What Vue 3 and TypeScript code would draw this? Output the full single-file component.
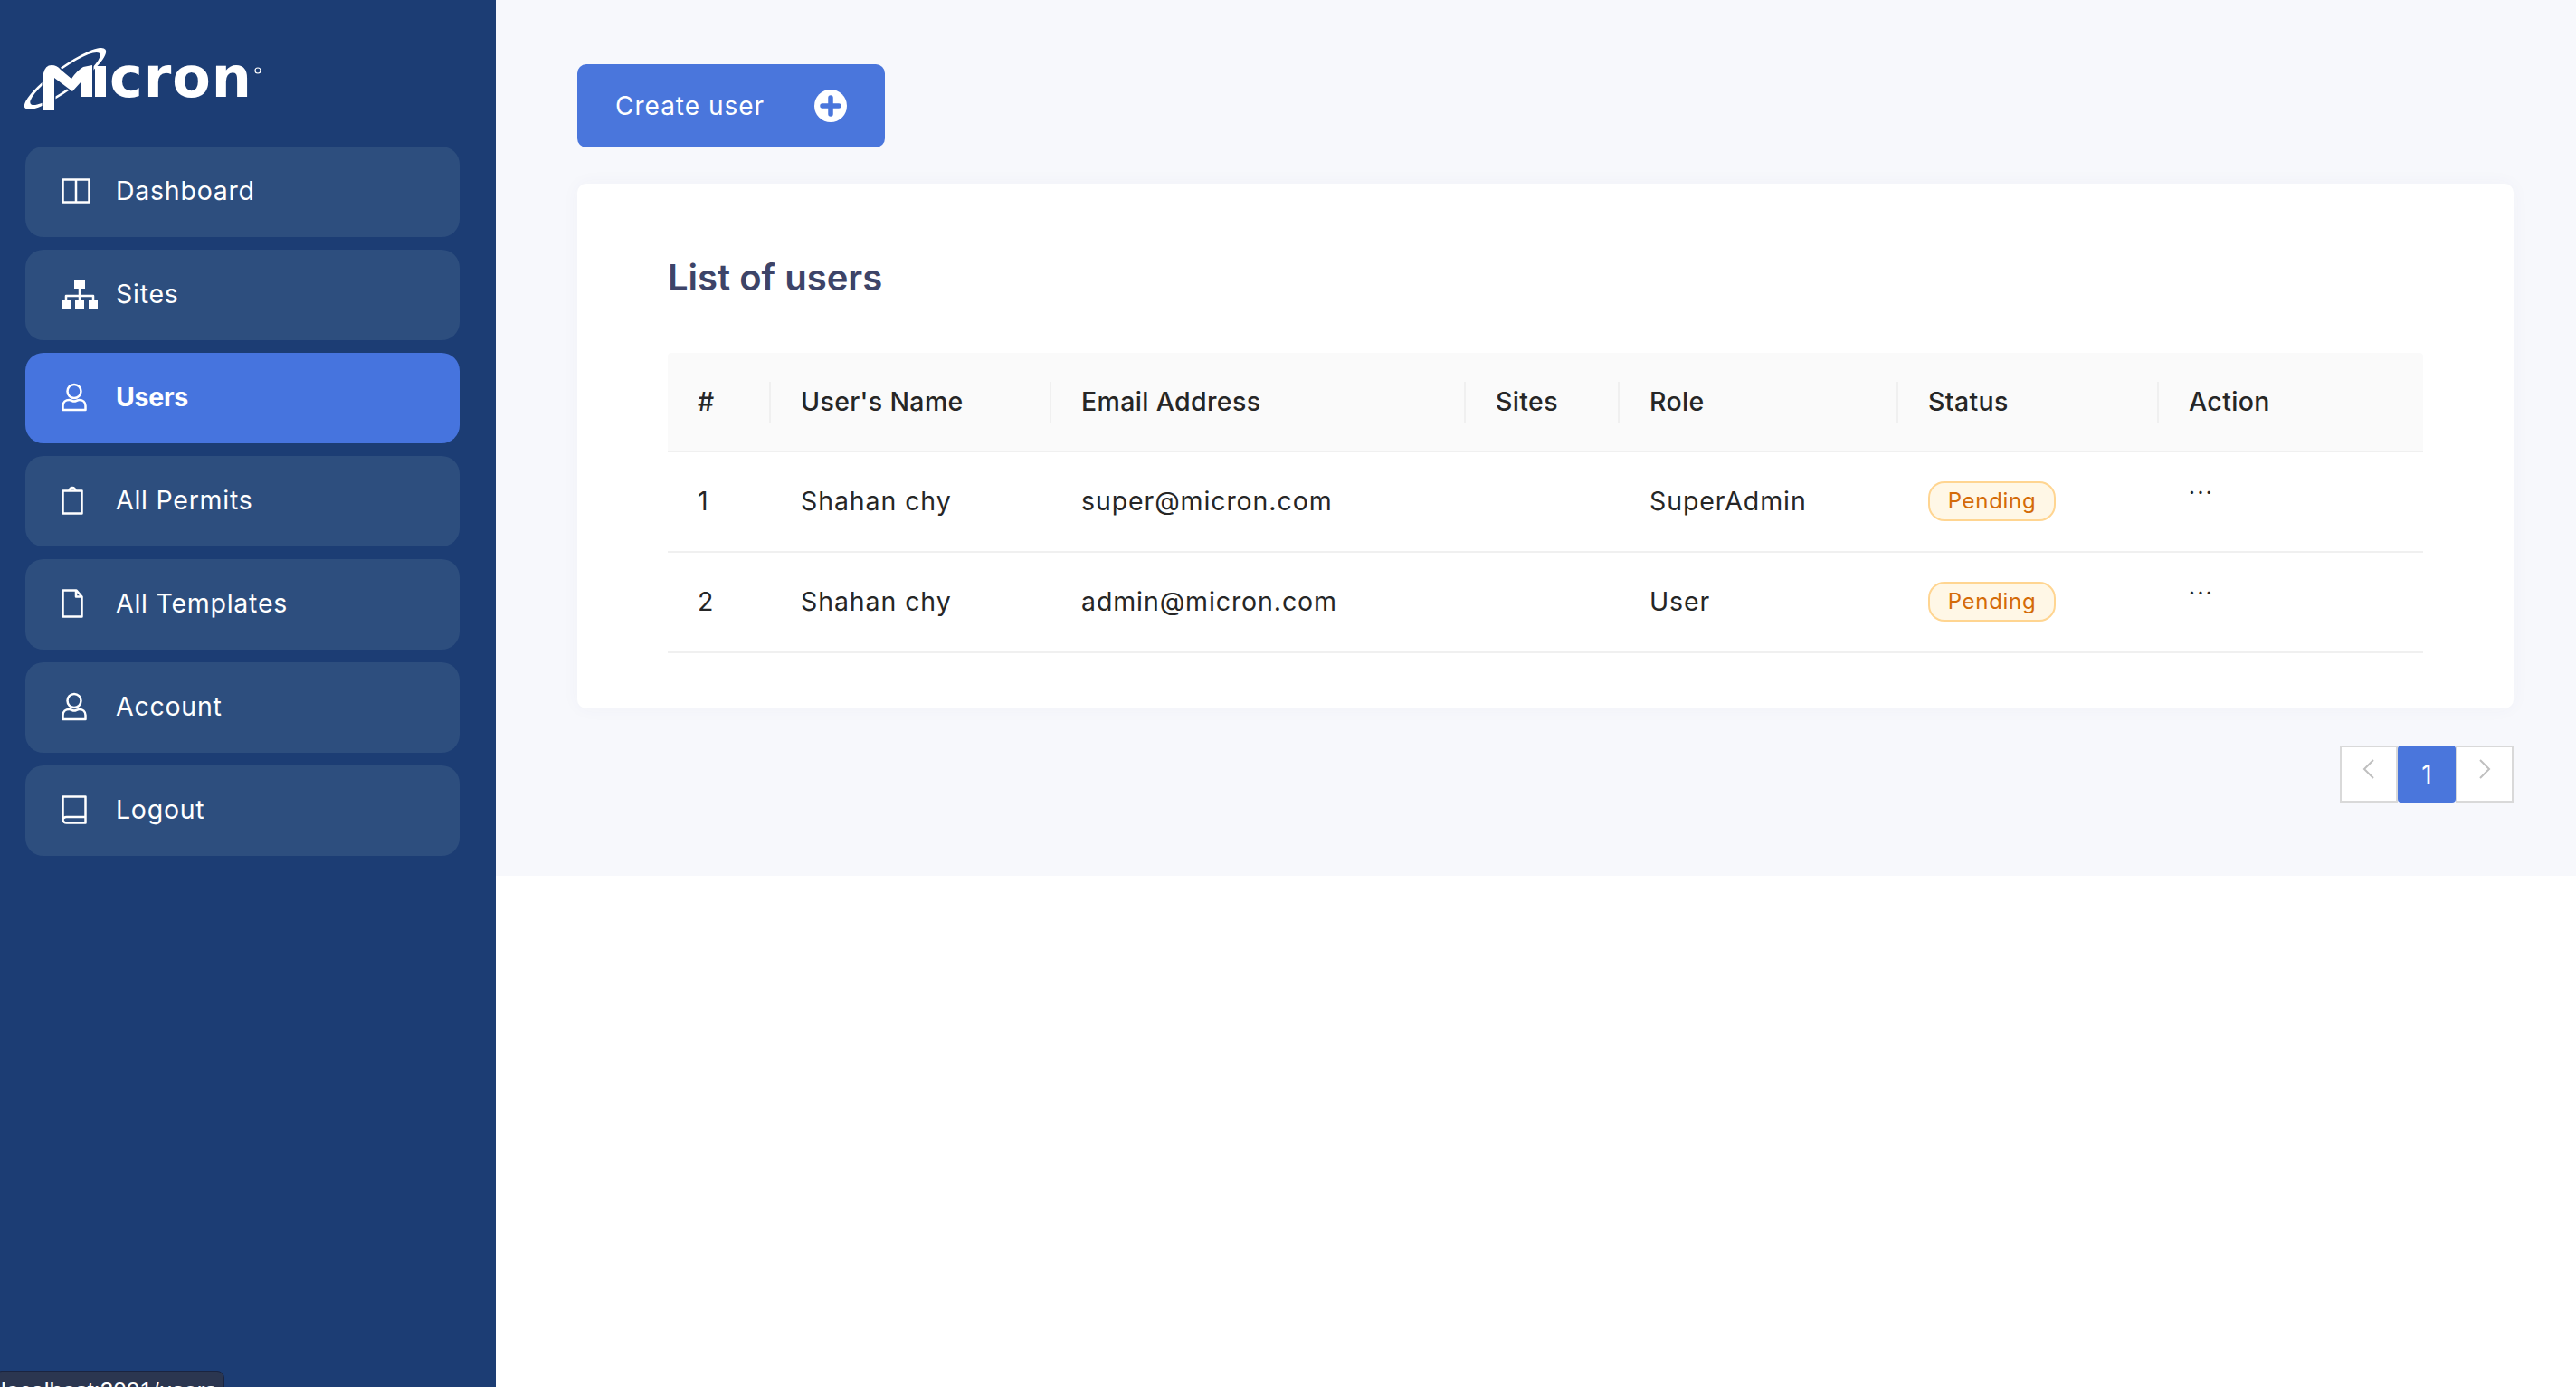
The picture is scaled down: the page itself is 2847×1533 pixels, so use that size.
<script setup lang="ts">
interface IconPart {
  d: string;
  fill?: boolean;
}

interface NavItem {
  label: string;
  width: number;
  height: number;
  parts: IconPart[];
  active?: boolean;
}

interface UserRow {
  id: number;
  name: string;
  email: string;
  sites: string;
  role: string;
  status: string;
}

const userIcon: IconPart[] = [
  { d: 'M14 2a7.5 7.5 0 1 1 0 15a7.5 7.5 0 1 1 0-15z' },
  { d: 'M1.5 30v-4.500c0-4 3-6.500 7-6.500c2 0 3.500 1.500 5.500 1.500s3.500-1.500 5.500-1.500c4 0 7 2.500 7 6.500v4.500z' },
];

const navItems: NavItem[] = [
  {
    label: 'Dashboard', width: 32, height: 28,
    parts: [{ d: 'M1.500 1.500h29v25h-29zM16 1.500v25' }],
  },
  {
    label: 'Sites', width: 40, height: 32,
    parts: [
      { d: 'M14 0h12v10h-12zM0 23h10v9h-10zM15 23h10v9h-10zM30 23h10v9h-10z', fill: true },
      { d: 'M5 24v-6h30v6M20 9v15' },
    ],
  },
  { label: 'Users', width: 28, height: 32, parts: userIcon, active: true },
  {
    label: 'All Permits', width: 24, height: 32,
    parts: [{ d: 'M1.500 5.500h21v25h-21zM8.500 5.500a3.500 3.500 0 0 1 7 0' }],
  },
  {
    label: 'All Templates', width: 24, height: 32,
    parts: [{ d: 'M1.500 1.500h15l6 7v22h-21zM16 1.500v7h6.500' }],
  },
  { label: 'Account', width: 28, height: 32, parts: userIcon },
  {
    label: 'Logout', width: 28, height: 32,
    parts: [{ d: 'M1.500 27V1.500h25v29h-21a4 3.500 0 0 1 -4-3.500a4 3 0 0 1 4-3h21' }],
  },
];

const columns = ['#', "User's Name", 'Email Address', 'Sites', 'Role', 'Status', 'Action'];

const users: UserRow[] = [
  { id: 1, name: 'Shahan chy', email: 'super@micron.com', sites: '', role: 'SuperAdmin', status: 'Pending' },
  { id: 2, name: 'Shahan chy', email: 'admin@micron.com', sites: '', role: 'User', status: 'Pending' },
];
</script>

<template>
  <div class="layout">
    <aside class="sidebar">
      <svg class="logo" viewBox="25 40 270 90" role="img" aria-label="Micron">
        <g transform="rotate(-36 72 87)">
          <path class="logo-fill" fill-rule="evenodd" d="M17 87a55 13 0 1 0 110 0a55 13 0 1 0-110 0zM25 88a47 10.500 0 1 0 94-2a47 10.500 0 1 0-94 2z" />
        </g>
        <path class="logo-m" d="M48 122V81Q50 72 57 72Q63 72 67 77L79 87Q85 78 92 74L102 72V107H90V90L80 101L60 86V122Z" />
        <rect class="logo-fill" x="105" y="73" width="12" height="34" />
        <text class="logo-word" x="121" y="107" textLength="157">cron</text>
        <circle class="logo-reg" cx="285" cy="78" r="3" />
      </svg>

      <nav class="nav">
        <a v-for="item in navItems" :key="item.label" class="nav-item" :class="{ active: item.active }">
          <span class="nav-icon">
            <svg :width="item.width" :height="item.height" :viewBox="`0 0 ${item.width} ${item.height}`">
              <path
                v-for="(part, i) in item.parts"
                :key="i"
                :d="part.d"
                :class="part.fill ? 'icon-fill' : 'icon-line'"
              />
            </svg>
          </span>
          <span class="nav-label">{{ item.label }}</span>
        </a>
      </nav>
    </aside>

    <main class="main">
      <section class="content">
        <button class="create-btn" type="button">
          <span>Create user</span>
          <svg width="36" height="36" viewBox="0 0 36 36">
            <circle cx="18" cy="18" r="18" fill="#fff" />
            <path d="M18 9v18M9 18h18" stroke="#4a76dc" stroke-width="5.500" stroke-linecap="round" />
          </svg>
        </button>

        <div class="card">
          <h2 class="title">List of users</h2>
          <table class="table">
            <colgroup>
              <col style="width: 114px" />
              <col style="width: 310px" />
              <col style="width: 458px" />
              <col style="width: 170px" />
              <col style="width: 308px" />
              <col style="width: 288px" />
              <col />
            </colgroup>
            <thead>
              <tr>
                <th v-for="col in columns" :key="col">{{ col }}</th>
              </tr>
            </thead>
            <tbody>
              <tr v-for="user in users" :key="user.email">
                <td>{{ user.id }}</td>
                <td>{{ user.name }}</td>
                <td>{{ user.email }}</td>
                <td>{{ user.sites }}</td>
                <td>{{ user.role }}</td>
                <td><span class="tag">{{ user.status }}</span></td>
                <td class="action"><span>...</span></td>
              </tr>
            </tbody>
          </table>
        </div>

        <div class="pagination">
          <span class="page">
            <svg width="14" height="24" viewBox="0 0 14 24"><path d="M12 2L2 12l10 10" /></svg>
          </span>
          <span class="page current">1</span>
          <span class="page">
            <svg width="14" height="24" viewBox="0 0 14 24"><path d="M2 2l10 10L2 22" /></svg>
          </span>
        </div>
      </section>
    </main>

    <div class="status-url">localhost:3001/users</div>
  </div>
</template>

<style scoped>
.layout {
  display: flex;
  height: 100vh;
  overflow: hidden;
  font-family: Inter, "Liberation Sans", sans-serif;
  color: #262626;
}

.sidebar {
  flex: 0 0 548px;
  box-sizing: border-box;
  padding: 40px 40px 0 28px;
  background: #1c3d74;
}

.logo {
  display: block;
  width: 270px;
  height: 90px;
  margin: 0 0 32px -3px;
}

.logo-fill {
  fill: #fff;
}

.logo-m {
  fill: #fff;
  stroke: #1c3d74;
  stroke-width: 3px;
  paint-order: stroke;
}

.logo-word {
  fill: #fff;
  font-family: "DejaVu Sans", sans-serif;
  font-size: 62px;
  font-weight: 700;
}

.logo-reg {
  fill: none;
  stroke: #fff;
  stroke-width: 1.200px;
}

.nav {
  display: flex;
  flex-direction: column;
  gap: 14px;
}

.nav-item {
  display: flex;
  align-items: center;
  box-sizing: border-box;
  height: 100px;
  padding: 0 0 3px 40px;
  border-radius: 20px;
  background: #2d4e7e;
  color: #fff;
  font-size: 28.500px;
  letter-spacing: 0.75px;
}

.nav-item.active {
  background: #4674de;
  font-weight: 700;
  letter-spacing: -0.3px;
}

.nav-icon {
  display: flex;
  align-items: center;
  width: 61px;
}

.nav-label {
  margin-left: -1px;
}

.icon-line {
  fill: none;
  stroke: #fff;
  stroke-width: 2.500px;
  stroke-linejoin: round;
}

.icon-fill {
  fill: #fff;
}

.main {
  flex: 1;
  min-width: 0;
  background: #fff;
}

.content {
  padding: 71px 69px 81px 90px;
  background: #f7f8fc;
}

.create-btn {
  display: flex;
  align-items: center;
  justify-content: space-between;
  box-sizing: border-box;
  width: 340px;
  height: 92px;
  padding: 0 42px 0 42px;
  border: 0;
  border-radius: 10px;
  background: #4a76dc;
  color: #fff;
  font-family: inherit;
  font-size: 28px;
  letter-spacing: 1px;
}

.card {
  margin-top: 40px;
  padding: 74px 100px 61px;
  border-radius: 10px;
  background: #fff;
  box-shadow: 0 0 20px rgba(70, 80, 130, 0.04);
}

.title {
  margin: 0 0 53px;
  color: #3d4468;
  font-size: 40px;
  font-weight: 600;
  line-height: 60px;
}

.table {
  width: 100%;
  border-collapse: separate;
  border-spacing: 0;
  table-layout: fixed;
}

th,
td {
  box-sizing: border-box;
  padding: 0 0 0 33px;
  border-bottom: 2px solid #f0f0f0;
  font-size: 28.500px;
  text-align: left;
}

th {
  position: relative;
  height: 110px;
  padding-bottom: 2px;
  background: #fafafa;
  font-weight: 500;
  letter-spacing: 0.35px;
}

th:first-child {
  border-top-left-radius: 4px;
}

th:last-child {
  border-top-right-radius: 4px;
}

th:not(:last-child)::before {
  content: "";
  position: absolute;
  top: 32px;
  right: 0;
  width: 2px;
  height: 45px;
  background: #f0f0f0;
}

td {
  height: 111px;
  padding-bottom: 2px;
  font-weight: 400;
  letter-spacing: 0.9px;
}

.action {
  vertical-align: top;
  padding-top: 24px;
  font-size: 24px;
  line-height: 28px;
  letter-spacing: 2.500px;
}

.tag {
  display: inline-block;
  box-sizing: border-box;
  width: 141px;
  height: 44px;
  border: 2px solid #ffd591;
  border-radius: 18px;
  background: #fff7e6;
  color: #d46b08;
  font-size: 24px;
  line-height: 40px;
  letter-spacing: 0.7px;
  text-align: center;
  vertical-align: middle;
}

.pagination {
  display: flex;
  justify-content: flex-end;
  margin-top: 41px;
}

.page {
  display: flex;
  align-items: flex-start;
  justify-content: center;
  box-sizing: border-box;
  width: 64px;
  height: 63px;
  padding-top: 12px;
  border: 2px solid #d9d9d9;
  background: #fff;
}

.page svg {
  fill: none;
  stroke: #bfbfbf;
  stroke-width: 2px;
}

.page.current {
  align-items: center;
  padding-top: 0;
  border: 0;
  border-radius: 4px;
  background: #4a76dc;
  color: #fff;
  font-size: 28px;
}

.status-url {
  position: fixed;
  left: -6px;
  bottom: -31px;
  height: 40px;
  padding: 7px 8px 0 6px;
  border: 1px solid #1a2440;
  border-radius: 8px;
  background: #2b3650;
  color: #fff;
  font-family: "Liberation Sans", sans-serif;
  font-size: 26px;
  line-height: 28px;
}
</style>

<style>
html,
body {
  margin: 0;
  background: #fff;
  overflow: hidden;
}
</style>
